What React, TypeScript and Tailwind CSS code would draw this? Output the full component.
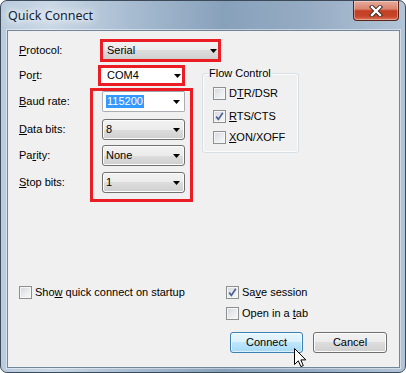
import React from 'react';

function U({ children }: { children: React.ReactNode }) {
  return <span className="underline underline-offset-[1px]">{children}</span>;
}

function Arrow() {
  return (
    <svg width="7" height="4" viewBox="0 0 7 4" className="shrink-0">
      <path d="M0 0h7L3.5 4z" fill="#000" />
    </svg>
  );
}

function Check({ checked }: { checked?: boolean }) {
  return (
    <span className="relative block w-[13px] h-[13px] shrink-0 border border-[#8e8f8f] bg-[linear-gradient(135deg,#d3d6db_0%,#eceef0_60%,#f7f7f7_100%)] shadow-[inset_0_0_0_1px_#f6f6f6]">
      {checked && (
        <svg width="11" height="11" viewBox="0 0 11 11" className="absolute left-[0px] top-[0px]">
          <path d="M2.2 5.6 L4.4 8.4 L8.8 1.8" fill="none" stroke="#4a5f93" strokeWidth="1.7" />
        </svg>
      )}
    </span>
  );
}

function DropCombo({ text, className }: { text: string; className: string }) {
  return (
    <div
      className={`flex items-center justify-between rounded-[3px] border border-[#707070] bg-[linear-gradient(180deg,#f2f2f2_0%,#ebebeb_50%,#dddddd_50%,#cfcfcf_100%)] shadow-[inset_0_0_0_1px_#fcfcfc] pl-[3px] pr-[4px] ${className}`}
    >
      <span>{text}</span>
      <Arrow />
    </div>
  );
}

function CheckRow({ checked, children, className }: { checked?: boolean; children: React.ReactNode; className?: string }) {
  return (
    <div className={`flex items-center h-[13px] gap-[3px] ${className ?? ''}`}>
      <Check checked={checked} />
      <span className="leading-[13px]">{children}</span>
    </div>
  );
}

export default function App() {
  return (
    <div className="w-[406px] h-[373px] relative overflow-hidden rounded-[7px] border border-[#3c4a59] bg-[linear-gradient(90deg,#b9cbdd_0%,#c9d8e6_12%,#a8bcd1_32%,#88a1bb_55%,#95abc3_75%,#b2c4d7_100%)] font-['Liberation_Sans',Arial,sans-serif] text-[11px] text-black select-none">
      {/* title bar */}
      <div className="h-[29px] flex items-start justify-between pl-[7px] pr-[6px]">
        <span className="mt-[6px] font-['Noto_Sans',sans-serif] text-[12.5px] text-[#10223a] [text-shadow:0_0_6px_#ffffff,0_0_10px_#ffffff,0_0_14px_#ffffff]">
          Quick Connect
        </span>
        <div className="w-[46px] h-[20px] flex items-center justify-center rounded-b-[4px] border border-t-0 border-[#5b2218] bg-[linear-gradient(180deg,#e8ab9c_0%,#d98470_42%,#c23f22_52%,#c6452a_80%,#dc7558_100%)] shadow-[inset_0_0_0_1px_rgba(255,255,255,0.35)]">
          <svg width="14" height="12" viewBox="0 0 14 12">
            <path d="M3 2 L11 10 M11 2 L3 10" stroke="#3a2a28" strokeWidth="4.2" strokeLinecap="square" />
            <path d="M3 2 L11 10 M11 2 L3 10" stroke="#ffffff" strokeWidth="2.4" strokeLinecap="square" />
          </svg>
        </div>
      </div>

      {/* client area */}
      <div className="ml-[6px] w-[393px] h-[338px] flex flex-col border border-[#73859a] bg-[#f0f0f0] shadow-[0_0_0_1px_rgba(255,255,255,0.45)]">
        {/* protocol */}
        <div className="flex items-center pl-[11px] mt-[8px]">
          <span className="w-[81px]">
            <U>P</U>rotocol:
          </span>
          <div className="w-[121px] h-[23px] border-[3px] border-[#ea1c24]">
            <div className="h-full flex items-center justify-between pl-[4px] pr-[1px] bg-[linear-gradient(180deg,#f2f2f2_0%,#ebebeb_50%,#dddddd_50%,#cfcfcf_100%)]">
              <span>Serial</span>
              <Arrow />
            </div>
          </div>
        </div>

        <div className="flex pl-[11px] mt-[3px]">
          {/* left column */}
          <div className="flex flex-col w-[174px]">
            <div className="flex items-center">
              <span className="w-[79px]">
                Po<U>r</U>t:
              </span>
              <div className="w-[87px] h-[21px] border-[3px] border-[#ea1c24]">
                <div className="h-full flex items-center justify-between pl-[6px] pr-[1px] bg-white">
                  <span>COM4</span>
                  <Arrow />
                </div>
              </div>
            </div>

            <div className="flex mt-[2px]">
              <div className="w-[71px] flex flex-col pt-[3px]">
                <div className="h-[21px] flex items-center">
                  <span>
                    <U>B</U>aud rate:
                  </span>
                </div>
                <div className="h-[21px] flex items-center mt-[7px]">
                  <span>
                    <U>D</U>ata bits:
                  </span>
                </div>
                <div className="h-[21px] flex items-center mt-[5px]">
                  <span>
                    Pa<U>r</U>ity:
                  </span>
                </div>
                <div className="h-[21px] flex items-center mt-[6px]">
                  <span>
                    <U>S</U>top bits:
                  </span>
                </div>
              </div>
              <div className="w-[103px] h-[114px] border-[3px] border-[#ea1c24] pl-[9px] flex flex-col">
                <div className="w-[83px] h-[21px] flex items-center justify-between rounded-[2px] border border-[#abadb3] border-t-[#9ea4ad] bg-white pl-[3px] pr-[4px]">
                  <span className="bg-[#3399ff] text-white px-[1px] leading-[13px]">115200</span>
                  <Arrow />
                </div>
                <DropCombo text="8" className="w-[83px] h-[21px] mt-[7px]" />
                <DropCombo text="None" className="w-[83px] h-[21px] mt-[5px]" />
                <DropCombo text="1" className="w-[83px] h-[21px] mt-[6px]" />
              </div>
            </div>
          </div>

          {/* flow control */}
          <fieldset className="ml-[9px] mt-[2px] w-[97px] h-[86px] rounded-[3px] border border-[#d5dfe5] shadow-[inset_0_0_0_1px_#fcfcfc]">
            <legend className="ml-[5px] px-[1px] leading-[13px]">Flow Control</legend>
            <div className="flex flex-col pl-[10px] pt-[7px]">
              <CheckRow>
                D<U>T</U>R/DSR
              </CheckRow>
              <CheckRow checked className="mt-[10px]">
                <U>R</U>TS/CTS
              </CheckRow>
              <CheckRow className="mt-[8px]">
                <U>X</U>ON/XOFF
              </CheckRow>
            </div>
          </fieldset>
        </div>

        {/* bottom */}
        <div className="mt-auto flex flex-col pb-[14px]">
          <div className="flex pl-[11px]">
            <div className="w-[207px]">
              <CheckRow>
                Sho<U>w</U> quick connect on startup
              </CheckRow>
            </div>
            <div className="flex flex-col">
              <CheckRow checked>
                Sa<U>v</U>e session
              </CheckRow>
              <CheckRow className="mt-[8px]">
                Open in a <U>t</U>ab
              </CheckRow>
            </div>
          </div>
          <div className="flex justify-end gap-[10px] pr-[12px] mt-[12px]">
            <button className="w-[73px] h-[21px] rounded-[3px] border border-[#3c7fb1] bg-[linear-gradient(180deg,#eaf6fd_0%,#d9f0fc_50%,#bee6fd_50%,#a7d9f5_100%)] shadow-[inset_0_0_0_1px_rgba(255,255,255,0.6)]">
              Connect
            </button>
            <button className="w-[74px] h-[21px] rounded-[3px] border border-[#707070] bg-[linear-gradient(180deg,#f2f2f2_0%,#ebebeb_50%,#dddddd_50%,#cfcfcf_100%)] shadow-[inset_0_0_0_1px_#fcfcfc]">
              Cancel
            </button>
          </div>
        </div>
      </div>

      {/* mouse cursor */}
      <svg width="13" height="20" viewBox="0 0 13 20" className="absolute left-[293px] top-[347px]">
        <path
          d="M0.5 0.5 L0.5 16.5 L4.3 12.8 L6.9 18.6 L9.3 17.6 L6.8 11.9 L11.8 11.9 Z"
          fill="#ffffff"
          stroke="#000000"
          strokeWidth="1"
          strokeLinejoin="miter"
        />
      </svg>
    </div>
  );
}
